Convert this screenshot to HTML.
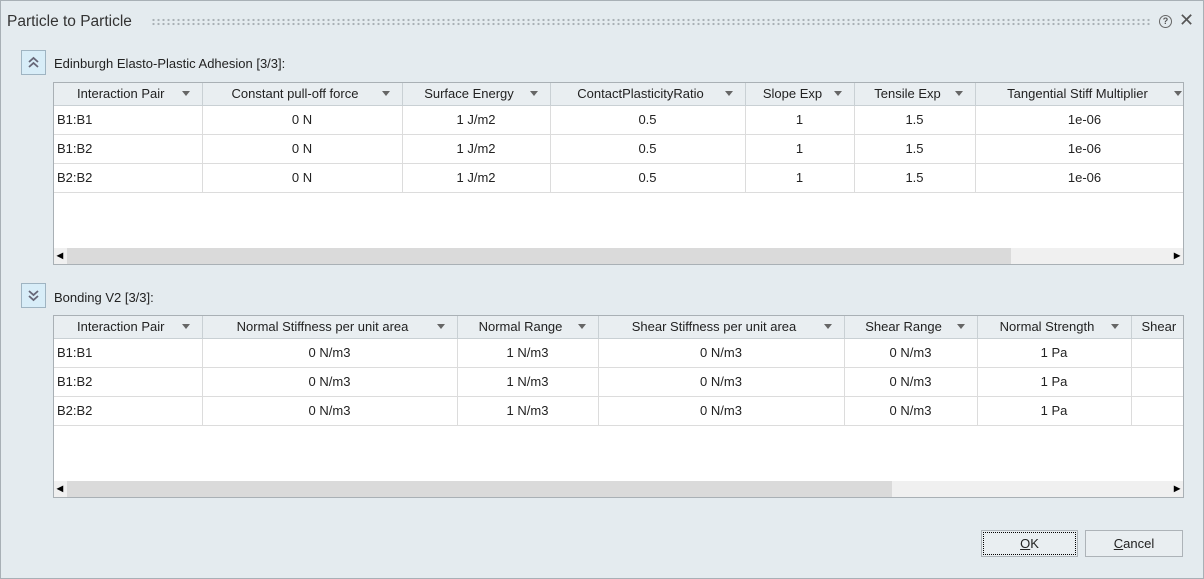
<!DOCTYPE html><html><head><style>
*{box-sizing:border-box;margin:0;padding:0}
body{width:1204px;height:579px;background:#e4ebef;font-family:"Liberation Sans",Arial,sans-serif;font-size:13px;color:#222;position:relative;overflow:hidden}
.frame{position:absolute;left:0;top:0;width:1204px;height:579px;border:1px solid #a8b0b6;pointer-events:none}
.abs{position:absolute}
.title{left:7px;top:13px;font-size:15.5px;color:#333}
.dots{left:151px;top:18px;width:1000px;height:8px;background-image:radial-gradient(circle,#a9b0b5 1px,transparent 1.3px);background-size:5px 4px}
.tog{width:25px;height:25px;border:1px solid #9fb4c2;background:#d8edf8}
.sec{font-size:13px}
.tbl{border:1px solid #a9b0b5;background:#fff;overflow:hidden}
table{border-collapse:collapse;table-layout:fixed;position:absolute;left:0;top:0}
td{height:29px;border-right:1px solid #dcdcdc;border-bottom:1px solid #dcdcdc;text-align:center;white-space:nowrap;overflow:hidden}
td:first-child{text-align:left;padding-left:3px}
th{height:22px;font-weight:normal;border-right:1px solid #c9d0d4;border-bottom:1px solid #c9d0d4;background:#e9eef1;white-space:nowrap;overflow:hidden;position:relative;text-align:center;padding-right:14px}
th:after{content:"";position:absolute;right:12px;top:8px;border-left:4px solid transparent;border-right:4px solid transparent;border-top:5px solid #666}
.sb{position:absolute;left:0;right:0;bottom:0;height:16px;background:#f0f0f0}
.th{position:absolute;left:13px;top:0;height:16px;background:#dadada}
.ar{position:absolute;top:0px;font-size:12px;color:#000;font-weight:bold}
.btn{height:27px;border:1px solid #adb3b8;background:#e9eef1;text-align:center;line-height:25px;font-size:13px}
</style></head><body>
<div class="abs title">Particle to Particle</div>
<div class="abs dots"></div>
<div class="abs" style="left:1159px;top:15px;width:13px;height:13px;border:1.5px solid #666;border-radius:50%;font-size:9px;text-align:center;line-height:10px;color:#555;font-weight:bold">?</div>
<div class="abs" style="left:1179px;top:10px;font-size:18px;color:#555">✕</div>

<div class="abs tog" style="left:21px;top:50px"><svg width="23" height="23"><path d="M7 11l4.5-4 4.5 4M7 16l4.5-4 4.5 4" stroke="#667" stroke-width="1.8" fill="none"/></svg></div>
<div class="abs sec" style="left:54px;top:56px">Edinburgh Elasto-Plastic Adhesion [3/3]:</div>
<div class="abs tbl" style="left:53px;top:82px;width:1131px;height:183px">
<table style="width:1140px"><colgroup><col style="width:148px"><col style="width:200px"><col style="width:148px"><col style="width:195px"><col style="width:109px"><col style="width:121px"><col style="width:219px"></colgroup>
<tr><th>Interaction Pair</th><th>Constant pull-off force</th><th>Surface Energy</th><th>ContactPlasticityRatio</th><th>Slope Exp</th><th>Tensile Exp</th><th>Tangential Stiff Multiplier</th></tr>
<tr><td>B1:B1</td><td>0 N</td><td>1 J/m2</td><td>0.5</td><td>1</td><td>1.5</td><td>1e-06</td></tr>
<tr><td>B1:B2</td><td>0 N</td><td>1 J/m2</td><td>0.5</td><td>1</td><td>1.5</td><td>1e-06</td></tr>
<tr><td>B2:B2</td><td>0 N</td><td>1 J/m2</td><td>0.5</td><td>1</td><td>1.5</td><td>1e-06</td></tr>
</table>
<div class="sb"><div class="th" style="width:944px"></div><span class="ar" style="left:3px">◂</span><span class="ar" style="right:3px">▸</span></div>
</div>

<div class="abs tog" style="left:21px;top:283px"><svg width="23" height="23"><path d="M7 7l4.5 4 4.5-4M7 12l4.5 4 4.5-4" stroke="#667" stroke-width="1.8" fill="none"/></svg></div>
<div class="abs sec" style="left:54px;top:290px">Bonding V2 [3/3]:</div>
<div class="abs tbl" style="left:53px;top:315px;width:1131px;height:183px">
<table style="width:1200px"><colgroup><col style="width:148px"><col style="width:255px"><col style="width:141px"><col style="width:246px"><col style="width:133px"><col style="width:154px"><col style="width:123px"></colgroup>
<tr><th>Interaction Pair</th><th>Normal Stiffness per unit area</th><th>Normal Range</th><th>Shear Stiffness per unit area</th><th>Shear Range</th><th>Normal Strength</th><th style="text-align:left;padding-left:10px">Shear</th></tr>
<tr><td>B1:B1</td><td>0 N/m3</td><td>1 N/m3</td><td>0 N/m3</td><td>0 N/m3</td><td>1 Pa</td><td></td></tr>
<tr><td>B1:B2</td><td>0 N/m3</td><td>1 N/m3</td><td>0 N/m3</td><td>0 N/m3</td><td>1 Pa</td><td></td></tr>
<tr><td>B2:B2</td><td>0 N/m3</td><td>1 N/m3</td><td>0 N/m3</td><td>0 N/m3</td><td>1 Pa</td><td></td></tr>
</table>
<div class="sb"><div class="th" style="width:825px"></div><span class="ar" style="left:3px">◂</span><span class="ar" style="right:3px">▸</span></div>
</div>

<div class="abs btn" style="left:981px;top:530px;width:97px;outline:1px dotted #000;outline-offset:-3px"><u>O</u>K</div>
<div class="abs btn" style="left:1085px;top:530px;width:98px"><u>C</u>ancel</div>
<div class="frame"></div>
</body></html>
